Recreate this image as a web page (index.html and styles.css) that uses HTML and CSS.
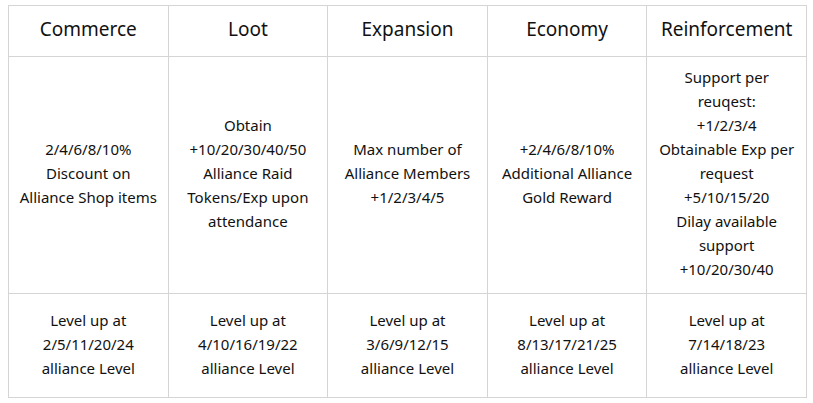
FILE: index.html
```html
<!DOCTYPE html>
<html>
<head>
<meta charset="utf-8">
<link rel="stylesheet" href="styles.css">
</head>
<body>
<table class="grid">
  <colgroup>
    <col class="c"><col class="c"><col class="c"><col class="c"><col class="c">
  </colgroup>
  <thead>
    <tr class="head">
      <th>Commerce</th>
      <th>Loot</th>
      <th>Expansion</th>
      <th>Economy</th>
      <th>Reinforcement</th>
    </tr>
  </thead>
  <tbody>
    <tr class="body">
      <td>2/4/6/8/10%<br>Discount on<br>Alliance Shop items</td>
      <td>Obtain<br>+10/20/30/40/50<br>Alliance Raid<br>Tokens/Exp upon<br>attendance</td>
      <td>Max number of<br>Alliance Members<br>+1/2/3/4/5</td>
      <td>+2/4/6/8/10%<br>Additional Alliance<br>Gold Reward</td>
      <td>Support per<br>reuqest:<br>+1/2/3/4<br>Obtainable Exp per<br>request<br>+5/10/15/20<br>Dilay available<br>support<br>+10/20/30/40</td>
    </tr>
    <tr class="foot">
      <td>Level up at<br>2/5/11/20/24<br>alliance Level</td>
      <td>Level up at<br>4/10/16/19/22<br>alliance Level</td>
      <td>Level up at<br>3/6/9/12/15<br>alliance Level</td>
      <td>Level up at<br>8/13/17/21/25<br>alliance Level</td>
      <td>Level up at<br>7/14/18/23<br>alliance Level</td>
    </tr>
  </tbody>
</table>
</body>
</html>
```

FILE: styles.css
```css
html, body {
  margin: 0;
  padding: 0;
  background: #ffffff;
}
body {
  padding: 5px 0 0 8px;
  font-family: "Noto Sans", "Noto Sans CJK KR", sans-serif;
  color: #111111;
}
.grid {
  border-collapse: collapse;
  width: 799px;
  table-layout: fixed;
}
.grid th, .grid td {
  border: 1px solid #d5d5d5;
  text-align: center;
  vertical-align: middle;
  padding: 0 6px 4px;
}
.grid th {
  font-weight: normal;
  font-size: 19px;
  height: 46px;
}
.grid td {
  font-size: 15px;
  line-height: 24px;
}
.body td {
  height: 232px;
}
.foot td {
  height: 99px;
}
```
